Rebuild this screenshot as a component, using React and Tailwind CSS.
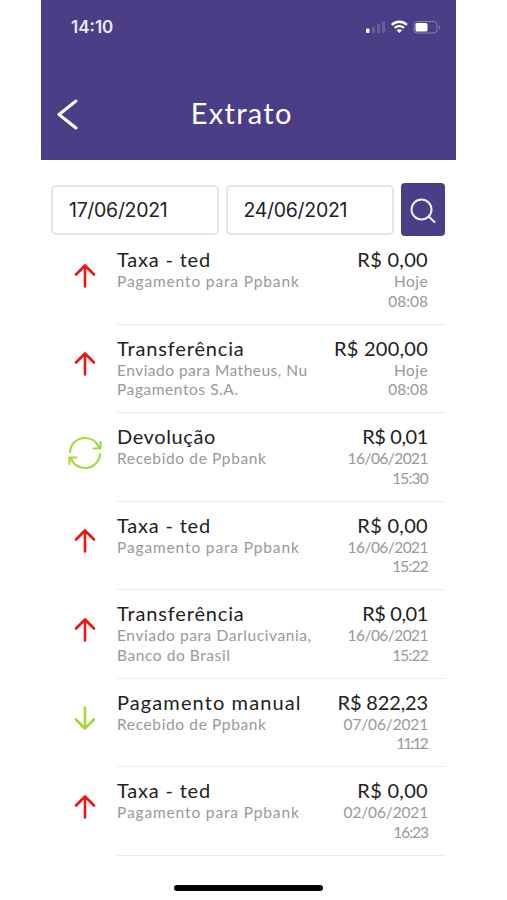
import React, { useState } from "react";

// Statement entries, newest first
const transactions = [
  {
    type: "out",
    title: "Taxa - ted",
    titleClass: "tracking-[0.8px]",
    detail: [{ text: "Pagamento para Ppbank", className: "tracking-[0.86px]" }],
    amount: "R$ 0,00",
    amountClass: "tracking-[0.3px]",
    date: "Hoje",
    dateClass: "tracking-[0.4px]",
    time: "08:08",
    timeClass: "tracking-[0px]",
  },
  {
    type: "out",
    title: "Transferência",
    titleClass: "tracking-[0.85px]",
    detail: [
      { text: "Enviado para Matheus, Nu", className: "tracking-[0.48px]" },
      { text: "Pagamentos S.A.", className: "tracking-[0.56px]" },
    ],
    amount: "R$ 200,00",
    amountClass: "tracking-[0.25px]",
    date: "Hoje",
    dateClass: "tracking-[0.4px]",
    time: "08:08",
    timeClass: "tracking-[0px]",
  },
  {
    type: "refund",
    title: "Devolução",
    titleClass: "tracking-[0.6px]",
    detail: [{ text: "Recebido de Ppbank", className: "tracking-[0.63px]" }],
    amount: "R$ 0,01",
    amountClass: "tracking-[-0.4px]",
    date: "16/06/2021",
    dateClass: "tracking-[-0.55px]",
    time: "15:30",
    timeClass: "tracking-[-0.8px]",
  },
  {
    type: "out",
    title: "Taxa - ted",
    titleClass: "tracking-[0.8px]",
    detail: [{ text: "Pagamento para Ppbank", className: "tracking-[0.86px]" }],
    amount: "R$ 0,00",
    amountClass: "tracking-[0.3px]",
    date: "16/06/2021",
    dateClass: "tracking-[-0.55px]",
    time: "15:22",
    timeClass: "tracking-[-0.8px]",
  },
  {
    type: "out",
    title: "Transferência",
    titleClass: "tracking-[0.85px]",
    detail: [
      { text: "Enviado para Darlucivania,", className: "tracking-[0.6px]" },
      { text: "Banco do Brasil", className: "tracking-[0.57px]" },
    ],
    amount: "R$ 0,01",
    amountClass: "tracking-[-0.4px]",
    date: "16/06/2021",
    dateClass: "tracking-[-0.55px]",
    time: "15:22",
    timeClass: "tracking-[-0.8px]",
  },
  {
    type: "in",
    title: "Pagamento manual",
    titleClass: "tracking-[1.1px]",
    detail: [{ text: "Recebido de Ppbank", className: "tracking-[0.63px]" }],
    amount: "R$ 822,23",
    amountClass: "tracking-[-0.15px]",
    date: "07/06/2021",
    dateClass: "tracking-[-0.15px]",
    time: "11:12",
    timeClass: "tracking-[-1.8px] pr-[1px]",
  },
  {
    type: "out",
    title: "Taxa - ted",
    titleClass: "tracking-[0.8px]",
    detail: [{ text: "Pagamento para Ppbank", className: "tracking-[0.86px]" }],
    amount: "R$ 0,00",
    amountClass: "tracking-[0.3px]",
    date: "02/06/2021",
    dateClass: "tracking-[-0.15px]",
    time: "16:23",
    timeClass: "tracking-[-1px]",
  },
];

function StatusIcons() {
  return (
    <svg width="76" height="14" viewBox="0 0 76 14" fill="none">
      {/* Signal */}
      <rect x="1" y="8.5" width="3.5" height="4.5" rx="1" fill="#fff" />
      <rect x="7" y="6.5" width="3" height="6.5" rx="1" fill="#6a5f9e" />
      <rect x="12" y="4" width="3" height="9" rx="1" fill="#6a5f9e" />
      <rect x="17" y="1.5" width="3" height="11.5" rx="1" fill="#6a5f9e" />
      {/* Wi-Fi */}
      <path d="M26.8 4.8c4.4-4.2 10.7-4.2 15.1 0" stroke="#fff" strokeWidth="2.5" />
      <path d="M29.7 7.9c2.7-2.5 6.6-2.5 9.3 0" stroke="#fff" strokeWidth="2.2" />
      <path d="M31.6 10.2c1.6-1.4 3.9-1.4 5.5 0l-2.75 2.9z" fill="#fff" />
      {/* Battery */}
      <rect x="49" y="1.5" width="23" height="11.5" rx="3" stroke="#8a81b5" strokeWidth="1" />
      <rect x="50.5" y="3" width="12" height="8.5" rx="1.5" fill="#fff" />
      <path d="M74 5.2v4c1.6-.5 1.6-3.5 0-4z" fill="#8a81b5" />
    </svg>
  );
}

function TransactionIcon({ type }) {
  if (type === "refund") {
    return (
      <svg width="34" height="34" viewBox="0 0 34 34" fill="none" stroke="#a5d83a" strokeWidth="2.2" strokeLinecap="round" strokeLinejoin="round">
        <path d="M2 16C2.5 8 9 2 17 2c6.500 0 12 4 14.300 10" />
        <path d="M32.5 6v6.500h-7" />
        <path d="M32 18C31.5 26 25 32 17 32c-6.500 0-12-4-14.300-10" />
        <path d="M1.500 28v-6.500h7" />
      </svg>
    );
  }

  return (
    <svg
      width="22"
      height="26"
      viewBox="0 0 22 26"
      fill="none"
      strokeWidth="2.6"
      strokeLinecap="round"
      strokeLinejoin="round"
      className={type === "in" ? "rotate-180 stroke-[#a5d83a]" : "stroke-[#ee1414]"}
    >
      <path d="M11 23.5V2.5M2 11.5l9-9 9 9" />
    </svg>
  );
}

function Transaction({ item }) {
  return (
    <li className="flex h-[88.5px]">
      <div className="flex w-[66px] shrink-0 justify-center pl-[1px]">
        <div className="flex h-[79px] items-center">
          <TransactionIcon type={item.type} />
        </div>
      </div>
      <div className="flex flex-1 justify-between border-b border-[#ebebeb] pt-[11px] pr-[17px]">
        <div className="whitespace-nowrap">
          <p className={`text-[20px] leading-[25px] text-[#222] ${item.titleClass}`}>{item.title}</p>
          {item.detail.map((line) => (
            <p key={line.text} className={`text-[15.5px] leading-[19.5px] text-[#999] ${line.className}`}>
              {line.text}
            </p>
          ))}
        </div>
        <div className="text-right whitespace-nowrap">
          <p className={`text-[20px] leading-[25px] text-[#222] ${item.amountClass}`}>{item.amount}</p>
          <p className={`text-[15.5px] leading-[19.5px] text-[#999] ${item.dateClass}`}>{item.date}</p>
          <p className={`text-[15.5px] leading-[19.5px] text-[#999] ${item.timeClass}`}>{item.time}</p>
        </div>
      </div>
    </li>
  );
}

function App() {
  const [startDate, setStartDate] = useState("17/06/2021");
  const [endDate, setEndDate] = useState("24/06/2021");

  const inputClass =
    "h-[50px] w-[168px] rounded-[5px] border-2 border-[#e5e5e5] bg-white pl-4 font-['Inter',sans-serif] text-[19.5px] tracking-[-0.3px] text-[#222] outline-none";

  return (
    <div className="h-[900px] w-[507px] overflow-hidden bg-white font-['Lato',sans-serif]">
      <div className="ml-[40.5px] flex h-full w-[415.5px] flex-col">
        {/* Header */}
        <header className="h-[160px] shrink-0 bg-[#4b3d86] text-white">
          <div className="flex h-[54px] items-center justify-between pr-[15px] pl-[30.5px]">
            <span className="pt-[2px] font-['Inter',sans-serif] text-[17px] font-semibold text-[#eeeaf8]">14:10</span>
            <StatusIcons />
          </div>
          <div className="grid h-[120px] grid-cols-[53px_1fr_66px] items-center">
            <button aria-label="Voltar" className="pl-[16px]">
              <svg width="22" height="32" viewBox="0 0 22 32" fill="none" stroke="#fff" strokeWidth="3" strokeLinecap="round" strokeLinejoin="round">
                <path d="M19 3L2 16.5L19 30" />
              </svg>
            </button>
            <h1 className="pb-[2px] text-center text-[29px] leading-[40px] tracking-[1.3px]">Extrato</h1>
          </div>
        </header>

        {/* Period filter */}
        <div className="mt-[23px] flex h-[53px] shrink-0 items-center pl-[10.5px]">
          <input aria-label="Data inicial" value={startDate} onChange={(e) => setStartDate(e.target.value)} className={inputClass} />
          <input aria-label="Data final" value={endDate} onChange={(e) => setEndDate(e.target.value)} className={`ml-[6.5px] ${inputClass}`} />
          <button aria-label="Buscar" className="ml-[7px] flex h-[53px] w-[44.5px] items-center justify-center rounded-[4px] bg-[#4b3d86]">
            <svg width="26" height="26" viewBox="0 0 26 26" fill="none" stroke="#f1eefb" strokeWidth="2" strokeLinecap="round">
              <circle cx="11.5" cy="12.500" r="10" />
              <path d="M18.8 19.500L24.500 25" />
            </svg>
          </button>
        </div>

        {/* Transactions */}
        <ul className="pr-[11px] pl-[10.5px]">
          {transactions.map((item, index) => (
            <Transaction key={index} item={item} />
          ))}
        </ul>

        {/* Home indicator */}
        <div className="mt-[29.5px] h-[6px] w-[149px] shrink-0 self-center rounded-full bg-black" />
      </div>
    </div>
  );
}

export default App;
